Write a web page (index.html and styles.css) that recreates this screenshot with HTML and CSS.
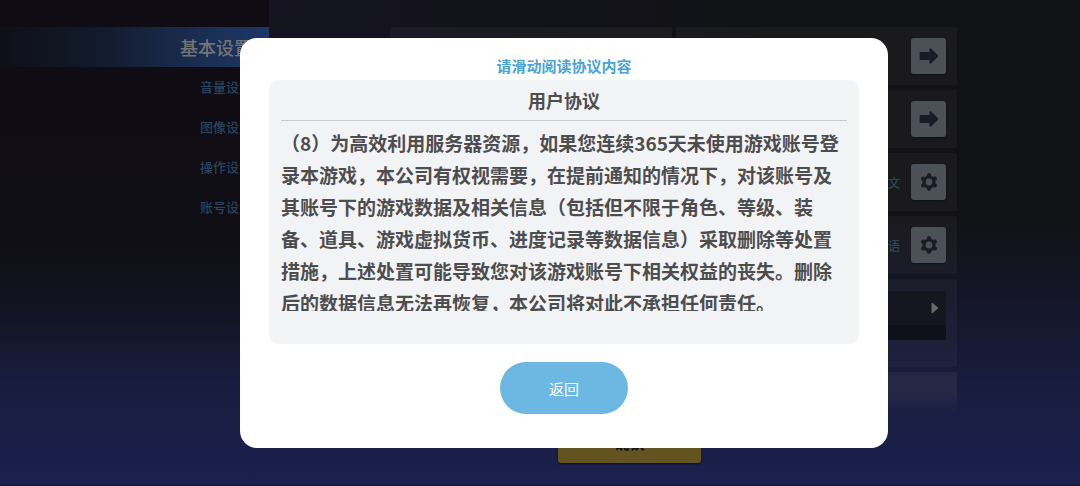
FILE: index.html
```html
<!DOCTYPE html>
<html lang="zh-CN">
<head>
    <meta charset="UTF-8">
    <meta name="viewport" content="width=device-width, initial-scale=1.0">
    <title>用户协议</title>
    <link rel="stylesheet" href="styles.css">
</head>
<body>
    <!-- icons shared by the setting buttons -->
    <svg class="sprite" aria-hidden="true">
        <symbol id="gear" viewBox="0 0 20 20">
            <circle cx="10" cy="10" r="5" fill="none" stroke="currentColor" stroke-width="3.2"/>
            <g stroke="currentColor" stroke-width="4.2" stroke-linecap="round">
                <path d="M10 3.400V3.200M10 16.600v.2M4.300 6.700l-.2-.1M15.700 13.300l.2.1M4.300 13.300l-.2.1M15.700 6.700l.2-.1"/>
            </g>
        </symbol>
        <symbol id="arrow" viewBox="0 0 20 20">
            <path d="M1.600 6h8.800V3.300c0-1.100 1-1.400 1.700-.7l6.600 6.500c.5.500.5 1.300 0 1.800l-6.600 6.500c-.7.700-1.700.4-1.700-.7V14H1.600c-.6 0-1-.4-1-1V7c0-.6.400-1 1-1z" fill="currentColor"/>
        </symbol>
    </svg>

    <div class="settings">
        <nav class="sidebar">
            <a class="tab active" href="#basic">基本设置</a>
            <a class="tab" href="#volume">音量设置</a>
            <a class="tab" href="#image">图像设置</a>
            <a class="tab" href="#control">操作设置</a>
            <a class="tab" href="#account">账号设置</a>
        </nav>

        <main class="content">
            <div class="columns">
                <div class="column">
                    <div class="card"></div>
                </div>
                <div class="column">
                    <div class="card">
                        <button class="icon-btn" aria-label="前往"><svg><use href="#arrow"/></svg></button>
                    </div>
                    <div class="card">
                        <button class="icon-btn" aria-label="前往"><svg><use href="#arrow"/></svg></button>
                    </div>
                    <div class="card">
                        <span class="value">文</span>
                        <button class="icon-btn" aria-label="设置"><svg><use href="#gear"/></svg></button>
                    </div>
                    <div class="card">
                        <span class="value">语</span>
                        <button class="icon-btn" aria-label="设置"><svg><use href="#gear"/></svg></button>
                    </div>
                    <div class="card card-list">
                        <button class="expand" aria-label="展开">
                            <svg viewBox="0 0 8 12"><path d="M1 1l6 5-6 5z"/></svg>
                        </button>
                        <div class="track"></div>
                    </div>
                    <div class="card card-fade"></div>
                </div>
            </div>
            <button class="confirm">确认</button>
        </main>
    </div>

    <div class="overlay">
        <section class="modal" role="dialog" aria-labelledby="title">
            <p class="hint">请滑动阅读协议内容</p>
            <div class="panel">
                <h1 class="title" id="title">用户协议</h1>
                <div class="agreement" tabindex="0">
                    <p>（8）为高效利用服务器资源，如果您连续365天未使用游戏账号登录本游戏，本公司有权视需要，在提前通知的情况下，对该账号及其账号下的游戏数据及相关信息（包括但不限于角色、等级、装备、道具、游戏虚拟货币、进度记录等数据信息）采取删除等处置措施，上述处置可能导致您对该游戏账号下相关权益的丧失。删除后的数据信息无法再恢复，本公司将对此不承担任何责任。</p>
                </div>
            </div>
            <button class="back">返回</button>
        </section>
    </div>
</body>
</html>
```

FILE: styles.css
```css
* {
    box-sizing: border-box;
}
body {
    margin: 0;
    font-family: "Noto Sans CJK SC", sans-serif;
    background-color: #12131a;
    overflow: hidden;
}
p, h1 {
    margin: 0;
}
button {
    font-family: inherit;
    border: none;
    padding: 0;
    cursor: pointer;
}
.sprite {
    display: none;
}

/* settings screen behind the dialog */
.settings {
    display: flex;
    min-height: 100vh;
    background: linear-gradient(#111215 0%, #111216 45%, #15172c 65%, #191d42 83%, #1b204e 100%);
    border-bottom: 1px solid #15172c;
}
.sidebar {
    flex: 0 0 269px;
    padding-top: 27px;
    background: linear-gradient(#0f0d13 0%, #0f0e14 42%, rgba(15, 14, 20, 0) 75%);
}
.tab {
    display: block;
    padding-right: 17px;
    font-size: 13px;
    line-height: 40px;
    font-weight: 500;
    text-align: right;
    text-decoration: none;
    color: #294460;
}
.tab.active {
    font-size: 18px;
    line-height: 40px;
    color: #747577;
    background: linear-gradient(90deg, #0e1018 0%, #121a2a 35%, #1a2e52 75%, #1d3765 100%);
}
.content {
    flex: 1;
    display: flex;
    flex-direction: column;
    align-items: center;
    padding: 27px 123px 0 121px;
    background: radial-gradient(ellipse at top left, rgba(24, 22, 40, 0.6), rgba(24, 22, 40, 0) 45%);
}
.columns {
    display: grid;
    grid-template-columns: 1fr 1fr;
    gap: 4px;
    width: 100%;
}
.column {
    display: flex;
    flex-direction: column;
    gap: 5px;
}
.card {
    display: flex;
    align-items: center;
    justify-content: flex-end;
    gap: 11px;
    height: 58px;
    padding-right: 11px;
    border-radius: 2px;
    background-color: rgba(110, 100, 110, 0.1);
}
.value {
    font-size: 12px;
    font-weight: 500;
    color: #2b4755;
}
.icon-btn {
    display: flex;
    align-items: center;
    justify-content: center;
    width: 35px;
    height: 36px;
    border-radius: 3px;
    background-color: #4b5157;
    color: #191c27;
    box-shadow: 0 1px 2px rgba(0, 0, 0, 0.4);
}
.icon-btn svg {
    width: 20px;
    height: 20px;
}
.card-list {
    flex-direction: column;
    align-items: stretch;
    justify-content: flex-start;
    gap: 0;
    height: 88px;
    padding-top: 12px;
}
.expand {
    display: flex;
    align-items: center;
    justify-content: flex-end;
    height: 34px;
    padding-right: 7px;
    background-color: #151620;
}
.expand svg {
    width: 8px;
    height: 12px;
    fill: #6a6a6c;
    stroke: #6a6a6c;
    stroke-linejoin: round;
}
.track {
    height: 15px;
    border-radius: 0 0 2px 2px;
    background-color: #0e1119;
}
.card-fade {
    height: 42px;
    background: linear-gradient(rgba(100, 100, 100, 0.17) 50%, rgba(100, 100, 100, 0));
}
.confirm {
    width: 143px;
    height: 49px;
    margin-right: 88px;
    padding-top: 8px;
    border-radius: 3px;
    font-size: 15px;
    font-weight: 900;
    color: #16151a;
    background-color: #635320;
    box-shadow: 0 1px 2px rgba(0, 0, 0, 0.5);
}

/* agreement dialog */
.overlay {
    position: fixed;
    inset: 0;
    display: flex;
    align-items: center;
    justify-content: center;
    padding-left: 48px;
}
.modal {
    display: flex;
    flex-direction: column;
    width: 60vw;
    padding: 14px 29px 34px;
    border-radius: 17px;
    background-color: #fff;
}
.hint {
    font-size: 15px;
    line-height: 28px;
    font-weight: 700;
    text-align: center;
    color: #4ba3d6;
}
.panel {
    padding: 0 12px 33px;
    border-radius: 10px;
    background-color: #f2f3f5;
}
.title {
    margin-bottom: 6px;
    border-bottom: 1px solid #c9cacc;
    font-size: 18px;
    line-height: 40px;
    font-weight: 700;
    text-align: center;
    color: #4d4d4e;
}
.agreement {
    height: 184px;
    overflow-y: auto;
    scrollbar-width: none;
    font-size: 19px;
    line-height: 32px;
    font-weight: 700;
    color: #4d4d4e;
}
.back {
    align-self: center;
    width: 128px;
    height: 52px;
    margin-top: 18px;
    border-radius: 26px;
    font-size: 15px;
    color: #fff;
    background-color: #6cb8e3;
}
```
